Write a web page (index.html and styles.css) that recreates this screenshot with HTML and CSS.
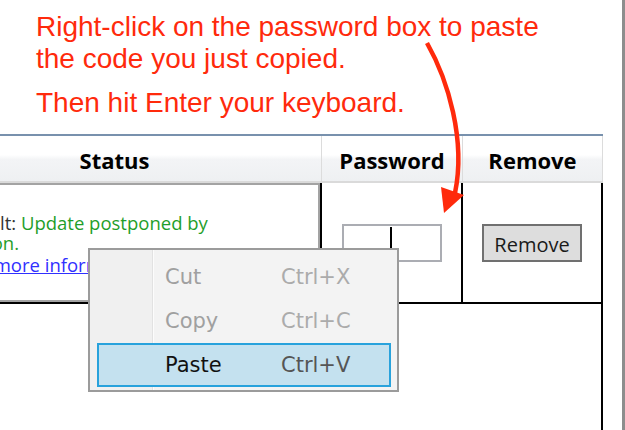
FILE: index.html
```html
<!DOCTYPE html>
<html lang="en">
<head>
  <meta charset="UTF-8">
  <meta name="viewport" content="width=device-width, initial-scale=1.0">
  <title>Paste Password</title>
  <link rel="stylesheet" href="styles.css">
</head>
<body>
  <div class="page">
    <div class="note">
      <p>Right-click on the password box to paste<br>the code you just copied.</p>
      <p>Then hit Enter your keyboard.</p>
    </div>

    <div class="grid">
      <!-- Header row -->
      <div class="head">Status</div>
      <div class="head">Password</div>
      <div class="head">Remove</div>

      <!-- Update row -->
      <div class="cell">
        <div class="status-box">
          <p class="msg"><span class="label">Result:</span> <span class="ok">Update postponed by<br>option.</span></p>
          <a class="more" href="#">See more information</a>
        </div>
      </div>
      <div class="cell center">
        <div class="pass-box"><span class="caret"></span></div>
      </div>
      <div class="cell center">
        <button class="remove-btn">Remove</button>
      </div>
      <div class="rest"></div>
    </div>

    <!-- Right-click menu on the password box -->
    <ul class="menu">
      <li><span>Cut</span><span class="key">Ctrl+X</span></li>
      <li><span>Copy</span><span class="key">Ctrl+C</span></li>
      <li class="active"><span>Paste</span><span class="key">Ctrl+V</span></li>
    </ul>

    <svg class="arrow" width="622" height="430" viewBox="0 0 622 430">
      <path d="M427 43 C448 80 466 140 455 193" fill="none" stroke="#ff2a0c" stroke-width="4.5"/>
      <polygon points="441,187 464,195 444,213" fill="#ff2a0c"/>
    </svg>
  </div>
</body>
</html>
```

FILE: styles.css
```css
body {
  margin: 0;
  background-color: #ffffff;
}

.page {
  position: relative;
  width: 622px;
  height: 430px;
  overflow: hidden;
  background-color: #ffffff;
  border-right: 3px solid #8d8d8d;
}

.note {
  box-sizing: border-box;
  height: 134px;
  padding: 11px 0 0 36px;
  font-family: "Liberation Sans", Arial, sans-serif;
  font-size: 28px;
  line-height: 32px;
  color: #ff2a0c;
}

.note p {
  margin: 0 0 12px;
}

/* table */
.grid {
  display: grid;
  grid-template-columns: 414px 141px 140px;
  width: 695px;
  margin-left: -92px;
  border-top: 2px solid #7891ad;
}

.head {
  box-sizing: border-box;
  height: 47px;
  padding-top: 4px;
  line-height: 41px;
  text-align: center;
  font-family: "Open Sans", sans-serif;
  font-size: 22px;
  font-weight: 700;
  color: #000000;
  background: linear-gradient(#ffffff 0%, #ffffff 42%, #f3f4f6 52%, #eef0f2 100%);
  border-bottom: 2px solid #dadada;
  border-right: 1px solid #dcdcdc;
}

.cell {
  box-sizing: border-box;
  height: 121px;
  border-right: 2px solid #000000;
  border-bottom: 2px solid #000000;
}

.center {
  display: flex;
  align-items: center;
  justify-content: center;
}

.status-box {
  box-sizing: border-box;
  height: 100%;
  padding: 28px 0 0 48px;
  border: 2px solid #a3a3a3;
  font-family: "Open Sans", sans-serif;
  font-size: 18.5px;
  line-height: 20px;
}

.msg {
  margin: 0;
}

.label {
  color: #333333;
}

.ok {
  color: #1f9e2a;
}

.more {
  display: block;
  margin-top: 2px;
  color: #3030ff;
  text-decoration: underline;
}

.pass-box {
  box-sizing: border-box;
  display: flex;
  width: 100px;
  height: 38px;
  padding: 1px 0;
  border: 2px solid #abadb3;
  background-color: #ffffff;
}

.caret {
  width: 2px;
  margin-left: 46px;
  background-color: #000000;
}

.remove-btn {
  box-sizing: border-box;
  width: 100px;
  height: 38px;
  padding: 3px 0 0;
  border: 2px solid #707070;
  background-color: #dddddd;
  font-family: "Open Sans", sans-serif;
  font-size: 20px;
  color: #1a1a1a;
}

.rest {
  grid-column: 1 / -1;
  height: 140px;
  border-right: 2px solid #000000;
}

/* context menu */
.menu {
  position: absolute;
  left: 88px;
  top: 248px;
  box-sizing: border-box;
  width: 311px;
  margin: 0;
  padding: 5px 6px 3px 7px;
  list-style: none;
  border: 2px solid #9b9b9b;
  background: linear-gradient(to right, #f0f0f0 0, #f0f0f0 62px, #e2e2e2 62px, #e2e2e2 63px, #fcfcfc 63px, #fcfcfc 64px, #f3f3f3 64px);
  font-family: "DejaVu Sans", sans-serif;
  font-size: 21px;
}

.menu li {
  box-sizing: border-box;
  display: grid;
  grid-template-columns: 116px auto;
  height: 44px;
  padding-left: 66px;
  line-height: 40px;
  border: 2px solid transparent;
  color: #a0a0a0;
}

.menu .key {
  color: #ababab;
}

.menu li.active {
  border-color: #28a2dc;
  background-color: #c4e1ef;
  color: #111111;
}

.menu li.active .key {
  color: #555555;
}

.arrow {
  position: absolute;
  left: 0;
  top: 0;
  pointer-events: none;
}
```
